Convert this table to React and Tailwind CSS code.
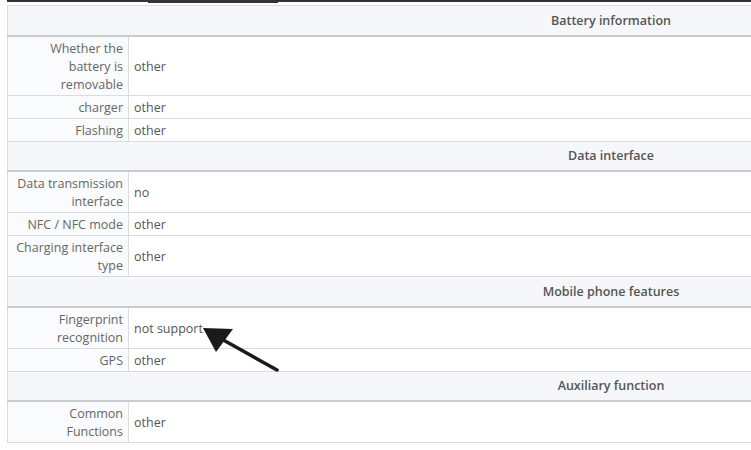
const sections = [
  {
    title: 'Battery information',
    rows: [
      { label: ['Whether the', 'battery is', 'removable'], value: 'other' },
      { label: ['charger'], value: 'other' },
      { label: ['Flashing'], value: 'other' },
    ],
  },
  {
    title: 'Data interface',
    rows: [
      { label: ['Data transmission', 'interface'], value: 'no' },
      { label: ['NFC / NFC mode'], value: 'other' },
      { label: ['Charging interface', 'type'], value: 'other' },
    ],
  },
  {
    title: 'Mobile phone features',
    rows: [
      { label: ['Fingerprint', 'recognition'], value: 'not support' },
      { label: ['GPS'], value: 'other' },
    ],
  },
  {
    title: 'Auxiliary function',
    rows: [{ label: ['Common', 'Functions'], value: 'other' }],
  },
];

const Arrow = () => (
  <svg className="absolute left-0 top-0" width="751" height="450" viewBox="0 0 751 450">
    <line x1="277" y1="370" x2="218" y2="337" stroke="#1a1a1a" strokeWidth="3.5" strokeLinecap="round" />
    <polygon points="203,328 233,329 216,352" fill="#1a1a1a" />
  </svg>
);

const App = () => {
  return (
    <div className="relative h-[450px] w-[751px] overflow-hidden bg-white font-['Open_Sans',sans-serif] text-[12.5px]">
      {/* top tab strip */}
      <div className="ml-[7px] h-[2px] w-[1300px] bg-[#333]">
        <div className="ml-[141px] h-[3px] w-[130px] bg-[#333]" />
      </div>

      <table className="ml-[7px] mt-[3px] w-[1208px] border-collapse border border-[#dcdcdc]">
        <tbody>
          {sections.map((section) => (
            <>
              <tr key={section.title} className="border-b-2 border-[#cbcbcb] bg-[#f5f7fb]">
                <td colSpan={2} className="h-[30px] pt-[2px] text-center text-[12.5px] font-semibold text-[#555]">
                  {section.title}
                </td>
              </tr>
              {section.rows.map((row) => (
                <tr key={row.label.join(' ')} className="border-b border-[#dcdcdc]">
                  <td className="w-[121px] border-r border-[#dcdcdc] bg-[#f9fbfd] pb-[1px] pr-[5px] pt-[3px] text-right leading-[18px] text-[#666]">
                    {row.label.map((l) => (
                      <div key={l}>{l}</div>
                    ))}
                  </td>
                  <td className="pb-[1px] pl-[5px] pt-[3px] align-middle leading-[18px] text-[#555]">
                    {row.value}
                  </td>
                </tr>
              ))}
            </>
          ))}
        </tbody>
      </table>

      <Arrow />
    </div>
  );
};

export default App;
